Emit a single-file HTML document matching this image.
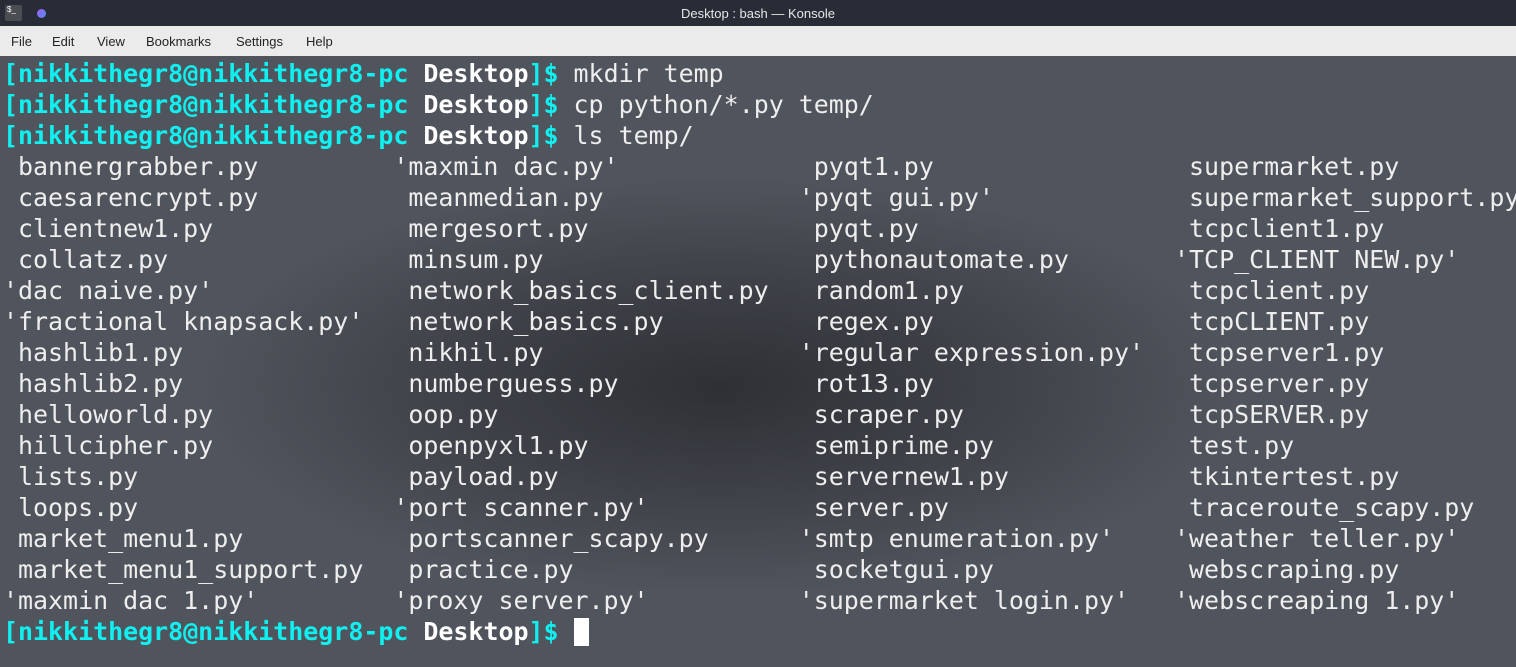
<!DOCTYPE html>
<html><head><meta charset="utf-8"><style>
html,body{margin:0;padding:0;width:1516px;height:667px;overflow:hidden;font-family:"Liberation Sans",sans-serif}
.title{position:absolute;left:0;top:0;width:1516px;height:26px;background:#272c37;color:#e6e6e6;font-size:13px;text-align:center;line-height:28px}
.ic{position:absolute;left:5px;top:5px;width:17px;height:16px;background:#4a4d52;border-radius:2px;color:#fff;font-size:8px;line-height:10px;text-align:left;padding-left:2px;box-sizing:border-box}
.dot{position:absolute;left:37px;top:9px;width:9px;height:9px;border-radius:50%;background:linear-gradient(135deg,#a45cf0,#4e8ff5)}
.menu{position:absolute;left:0;top:26px;width:1516px;height:30px;background:#ebebeb;color:#232323;font-size:13px}
.menu span{position:absolute;top:8px}
.term{position:absolute;left:0;top:56px;width:1516px;height:611px;background:radial-gradient(ellipse 520px 210px at 720px 330px,#2e3035 0%,#3c3f45 45%,#50545c 100%),#50545c;background-color:#50545c}
.t{position:absolute;left:3px;top:2px;font-family:"DejaVu Sans Mono","Liberation Mono",monospace;font-size:24.95px;line-height:31px;color:#eeeeee;white-space:normal}
.t div{height:31px;white-space:pre}
.c{color:#10f0f0;font-weight:bold}.w{color:#fff;font-weight:bold}
.a{display:inline-block;width:26ch}.b{display:inline-block;width:27ch}.d{display:inline-block;width:25ch}
.cur{display:inline-block;width:15px;height:28px;background:#fff;vertical-align:-6px}
</style></head><body>
<div class="title"><div class="ic">$_</div><div class="dot"></div>Desktop : bash — Konsole</div>
<div class="menu"><span style="left:11px">File</span><span style="left:52px">Edit</span><span style="left:97px">View</span><span style="left:146px">Bookmarks</span><span style="left:236px">Settings</span><span style="left:306px">Help</span></div>
<div class="term"><div class="t">
<div><span class="c">[nikkithegr8@nikkithegr8-pc </span><span class="w">Desktop</span><span class="c">]$</span> mkdir temp</div>
<div><span class="c">[nikkithegr8@nikkithegr8-pc </span><span class="w">Desktop</span><span class="c">]$</span> cp python/*.py temp/</div>
<div><span class="c">[nikkithegr8@nikkithegr8-pc </span><span class="w">Desktop</span><span class="c">]$</span> ls temp/</div>
<div><span class="a"> bannergrabber.py</span><span class="b">'maxmin dac.py'</span><span class="d"> pyqt1.py</span> supermarket.py</div>
<div><span class="a"> caesarencrypt.py</span><span class="b"> meanmedian.py</span><span class="d">'pyqt gui.py'</span> supermarket_support.py</div>
<div><span class="a"> clientnew1.py</span><span class="b"> mergesort.py</span><span class="d"> pyqt.py</span> tcpclient1.py</div>
<div><span class="a"> collatz.py</span><span class="b"> minsum.py</span><span class="d"> pythonautomate.py</span>'TCP_CLIENT NEW.py'</div>
<div><span class="a">'dac naive.py'</span><span class="b"> network_basics_client.py</span><span class="d"> random1.py</span> tcpclient.py</div>
<div><span class="a">'fractional knapsack.py'</span><span class="b"> network_basics.py</span><span class="d"> regex.py</span> tcpCLIENT.py</div>
<div><span class="a"> hashlib1.py</span><span class="b"> nikhil.py</span><span class="d">'regular expression.py'</span> tcpserver1.py</div>
<div><span class="a"> hashlib2.py</span><span class="b"> numberguess.py</span><span class="d"> rot13.py</span> tcpserver.py</div>
<div><span class="a"> helloworld.py</span><span class="b"> oop.py</span><span class="d"> scraper.py</span> tcpSERVER.py</div>
<div><span class="a"> hillcipher.py</span><span class="b"> openpyxl1.py</span><span class="d"> semiprime.py</span> test.py</div>
<div><span class="a"> lists.py</span><span class="b"> payload.py</span><span class="d"> servernew1.py</span> tkintertest.py</div>
<div><span class="a"> loops.py</span><span class="b">'port scanner.py'</span><span class="d"> server.py</span> traceroute_scapy.py</div>
<div><span class="a"> market_menu1.py</span><span class="b"> portscanner_scapy.py</span><span class="d">'smtp enumeration.py'</span>'weather teller.py'</div>
<div><span class="a"> market_menu1_support.py</span><span class="b"> practice.py</span><span class="d"> socketgui.py</span> webscraping.py</div>
<div><span class="a">'maxmin dac 1.py'</span><span class="b">'proxy server.py'</span><span class="d">'supermarket login.py'</span>'webscreaping 1.py'</div>
<div><span class="c">[nikkithegr8@nikkithegr8-pc </span><span class="w">Desktop</span><span class="c">]$</span> <span class="cur"></span></div>
</div></div>
</body></html>
